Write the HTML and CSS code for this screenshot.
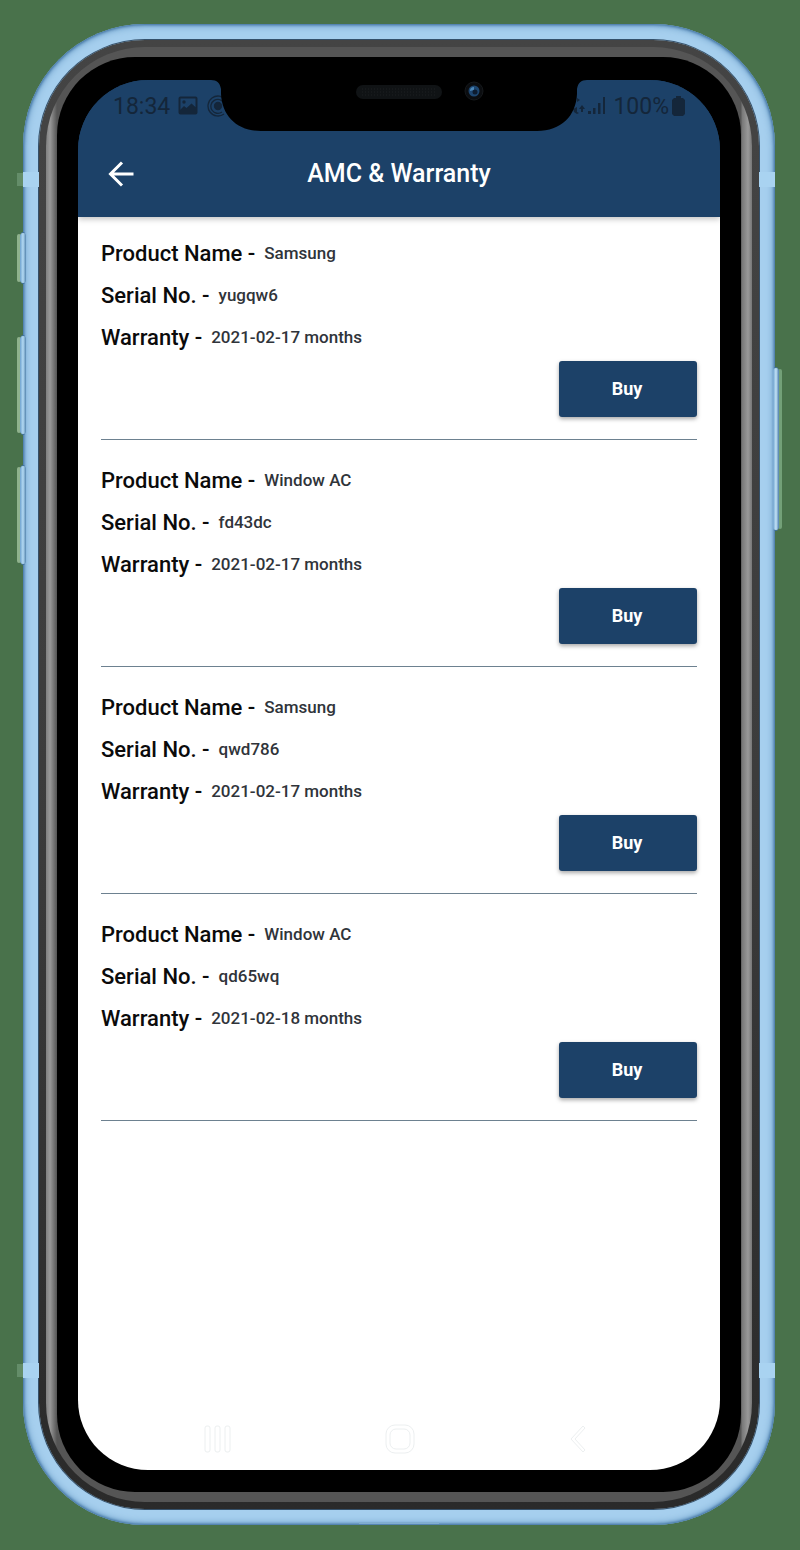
FILE: index.html
```html
<!DOCTYPE html>
<html lang="en">
<head>
<meta charset="utf-8">
<title>AMC &amp; Warranty</title>
<link rel="stylesheet" href="styles.css">
</head>
<body>
<div class="phone">
  <span class="side-key key-mute"></span>
  <span class="side-key key-up"></span>
  <span class="side-key key-down"></span>
  <span class="side-key key-power"></span>
  <span class="antenna antenna-tl"></span>
  <span class="antenna antenna-tr"></span>
  <span class="antenna antenna-bl"></span>
  <span class="antenna antenna-br"></span>
  <span class="port"></span>
  <div class="rim"><div class="bevel"><div class="bezel">
    <div class="screen">
      <header class="top">
        <div class="status">
          <div class="status-group">
            <span>18:34</span>
            <svg width="20" height="20" viewBox="0 0 20 20"><rect x="1.500" y="1.500" width="17" height="16" rx="1" fill="none" stroke="currentColor" stroke-width="2"/><circle cx="6" cy="6" r="1.700" fill="currentColor"/><path d="M2 14l4-4 2.500 2 5-4.500 5 4.500v6H2z" fill="currentColor"/></svg>
            <svg width="22" height="22" viewBox="0 0 22 22" fill="none" stroke="currentColor" stroke-width="1.300"><circle cx="12" cy="11" r="3.500" fill="currentColor"/><path d="M16 17A7 7 0 1 1 18 8M18 19A10 10 0 1 1 20 5"/></svg>
          </div>
          <div class="status-group status-right">
            <svg width="12" height="18" viewBox="0 0 12 18" fill="currentColor"><path d="M4 1l3 2-3 2zM0 12l4-2v5l2 1-2 1-3-2zM9 8l3 4h-2v3H8v-3H6z"/></svg>
            <svg width="18" height="18" viewBox="0 0 18 18" fill="currentColor"><path d="M0 14h3v3H0zM5 11h2.500v6H5zM10 6h2.500v11H10zM15 0h2v17h-2z"/></svg>
            <span class="percent">100%</span>
            <svg width="13" height="20" viewBox="0 0 13 20" fill="currentColor"><path d="M4 0h5v2h2l2 2v14l-2 2H2l-2-2V4l2-2h2z"/></svg>
          </div>
        </div>
        <div class="title-bar">
          <button class="back" aria-label="Back"><svg width="26" height="26" viewBox="0 0 26 26" fill="none" stroke="#fff" stroke-width="3"><path d="M25.500 13H2.500M14 1.500L2.500 13 14 24.500"/></svg></button>
          <h1>AMC &amp; Warranty</h1>
        </div>
      </header>
      <main class="list">
        <section class="item">
          <p class="row"><span class="label">Product Name -</span><span class="value">Samsung</span></p>
          <p class="row"><span class="label">Serial No. -</span><span class="value">yugqw6</span></p>
          <p class="row"><span class="label">Warranty -</span><span class="value">2021-02-17 months</span></p>
          <button class="buy">Buy</button>
        </section>
        <section class="item">
          <p class="row"><span class="label">Product Name -</span><span class="value">Window AC</span></p>
          <p class="row"><span class="label">Serial No. -</span><span class="value">fd43dc</span></p>
          <p class="row"><span class="label">Warranty -</span><span class="value">2021-02-17 months</span></p>
          <button class="buy">Buy</button>
        </section>
        <section class="item">
          <p class="row"><span class="label">Product Name -</span><span class="value">Samsung</span></p>
          <p class="row"><span class="label">Serial No. -</span><span class="value">qwd786</span></p>
          <p class="row"><span class="label">Warranty -</span><span class="value">2021-02-17 months</span></p>
          <button class="buy">Buy</button>
        </section>
        <section class="item">
          <p class="row"><span class="label">Product Name -</span><span class="value">Window AC</span></p>
          <p class="row"><span class="label">Serial No. -</span><span class="value">qd65wq</span></p>
          <p class="row"><span class="label">Warranty -</span><span class="value">2021-02-18 months</span></p>
          <button class="buy">Buy</button>
        </section>
      </main>
      <nav class="nav">
        <button aria-label="Recent apps"><svg width="28" height="30" viewBox="0 0 28 30"><rect x="1" y="2" width="5" height="26" rx="2"/><rect x="11" y="2" width="5" height="26" rx="2"/><rect x="21" y="2" width="5" height="26" rx="2"/></svg></button>
        <button aria-label="Home"><svg width="30" height="30" viewBox="0 0 30 30"><rect x="1" y="1" width="28" height="28" rx="9"/><rect x="5" y="5" width="20" height="20" rx="6"/></svg></button>
        <button aria-label="Back"><svg width="28" height="30" viewBox="0 0 28 30"><path d="M16 2L4 15l12 13 2-2L8 15 18 4z"/></svg></button>
      </nav>
      <svg class="notch" width="376" height="51" viewBox="0 0 376 51"><path d="M0 0C6 0 9 3 10 9V14C11 36 26 51 50 51H326C350 51 365 36 366 14V9C367 3 370 0 376 0z"/><rect x="145" y="5" width="86" height="14" rx="7" fill="#101315"/><path d="M151 9H225M151 12H225M151 15H225" stroke="#1d2123" stroke-dasharray="1 2"/><circle cx="263" cy="11" r="9" fill="#0b0d10" stroke="#16191c"/><circle cx="263" cy="11" r="5.500" fill="#1d4670"/><path d="M259 11a4 4 0 0 1 4-4v3z" fill="#4a86b8"/><circle cx="264" cy="12" r="2.500" fill="#0d1c30"/></svg>
    </div>
  </div></div></div>
</div>
</body>
</html>
```
FILE: styles.css
```css
* { box-sizing: border-box; }
body {
  margin: 0;
  min-height: 100vh;
  padding: 24px 25px 25px 23px;
  display: flex;
  background: #49724b;
  font-family: Roboto, "Liberation Sans", sans-serif;
}
button { border: 0; padding: 0; background: none; font: inherit; cursor: pointer; }
svg { display: block; }
.phone {
  position: relative;
  flex: 1;
  display: flex;
  padding: 16px;
  border-radius: 122px;
  background: #a6cfee;
  box-shadow: inset 0 0 3px 1px #3d6f9e, inset 0 0 7px 2px #6fa0c9;
}
.rim {
  flex: 1;
  display: flex;
  padding: 7px;
  border-radius: 106px;
  background: linear-gradient(#444, #3c3c3c 50%, #2a2a2a);
  box-shadow: 0 0 0 1px #34506a;
}
.bevel {
  flex: 1;
  display: flex;
  padding: 10px 11px;
  border-radius: 99px;
  background: linear-gradient(90deg, #808080, #999 4px, #555 11px, #555 calc(100% - 11px), #777 calc(100% - 10px), #999 calc(100% - 4px), #777);
}
.bezel {
  flex: 1;
  display: flex;
  padding: 23px 21px 22px;
  border-radius: 78px;
  background: #000;
}
.screen {
  position: relative;
  flex: 1;
  display: flex;
  flex-direction: column;
  overflow: hidden;
  border-radius: 70px;
  background: linear-gradient(#1c4168 100px, #fff 100px);
}
.top { background: #1c4168; box-shadow: 0 2px 6px rgba(0, 0, 0, .25); }
.status {
  display: flex;
  justify-content: space-between;
  align-items: center;
  height: 52px;
  padding: 0 35px;
  color: #14263a;
  font-size: 23px;
}
.status-group { display: flex; align-items: center; gap: 8px; }
.status-right { gap: 3px; }
.percent { margin-left: 4px; }
.title-bar {
  display: grid;
  grid-template-columns: 30px 1fr 30px;
  align-items: center;
  height: 85px;
  padding: 0 30px 2px;
}
h1 { margin: 0; text-align: center; color: #fff; font-size: 25px; font-weight: 500; line-height: 30px; }
.list {
  flex: 1;
  display: flex;
  flex-direction: column;
  gap: 19px;
  padding: 15px 23px;
}
.item {
  display: flex;
  flex-direction: column;
  padding-bottom: 22px;
  border-bottom: 1px solid #6d8190;
}
.row {
  display: flex;
  align-items: center;
  gap: 9px;
  height: 42px;
  margin: 0;
  font-weight: 500;
}
.label { color: #0b0b0b; font-size: 22px; }
.value { color: #30343a; font-size: 17px; }
.buy {
  align-self: flex-end;
  width: 138px;
  height: 56px;
  margin-top: 3px;
  padding: 0 2px 2px 0;
  border-radius: 3px;
  background: #1c4168;
  color: #fff;
  font-size: 18px;
  font-weight: 700;
  box-shadow: 0 2px 4px rgba(0, 0, 0, .35);
}
.nav {
  display: flex;
  justify-content: space-between;
  padding: 0 125px 16px 126px;
}
.nav svg { fill: none; stroke: #eceff0; stroke-width: 1; }
.notch { position: absolute; top: 0; left: 50%; transform: translateX(-50%); }
.side-key {
  position: absolute;
  left: -3px;
  width: 6px;
  border-radius: 3px;
  background: linear-gradient(90deg, #6fa3cf, #b4daf3 50%, #5585ae);
  box-shadow: 0 -2px 0 -1px #42729a, 0 2px 0 -1px #42729a, -4px 0 0 -1px #8fb28d;
}
.key-mute { top: 209px; height: 50px; }
.key-up { top: 312px; height: 98px; }
.key-down { top: 442px; height: 98px; }
.key-power {
  left: auto;
  right: -4px;
  top: 344px;
  height: 162px;
  background: linear-gradient(90deg, #6fa3cf, #c4e3f7 50%, #4c7dab);
  box-shadow: 0 -2px 0 -1px #42729a, 0 2px 0 -1px #42729a, 4px 0 0 -1px #73a078;
}
.antenna { position: absolute; width: 16px; height: 15px; background: #a9d3f1; }
.antenna-tl, .antenna-bl { left: 0; box-shadow: -7px 0 0 -1px #648d69; }
.antenna-tr, .antenna-br { right: 0; }
.antenna-tl, .antenna-tr { top: 148px; }
.antenna-bl, .antenna-br { bottom: 147px; }
.port { position: absolute; left: 50%; bottom: 1px; width: 80px; height: 2px; margin-left: -40px; background: #80adcf; }
```
